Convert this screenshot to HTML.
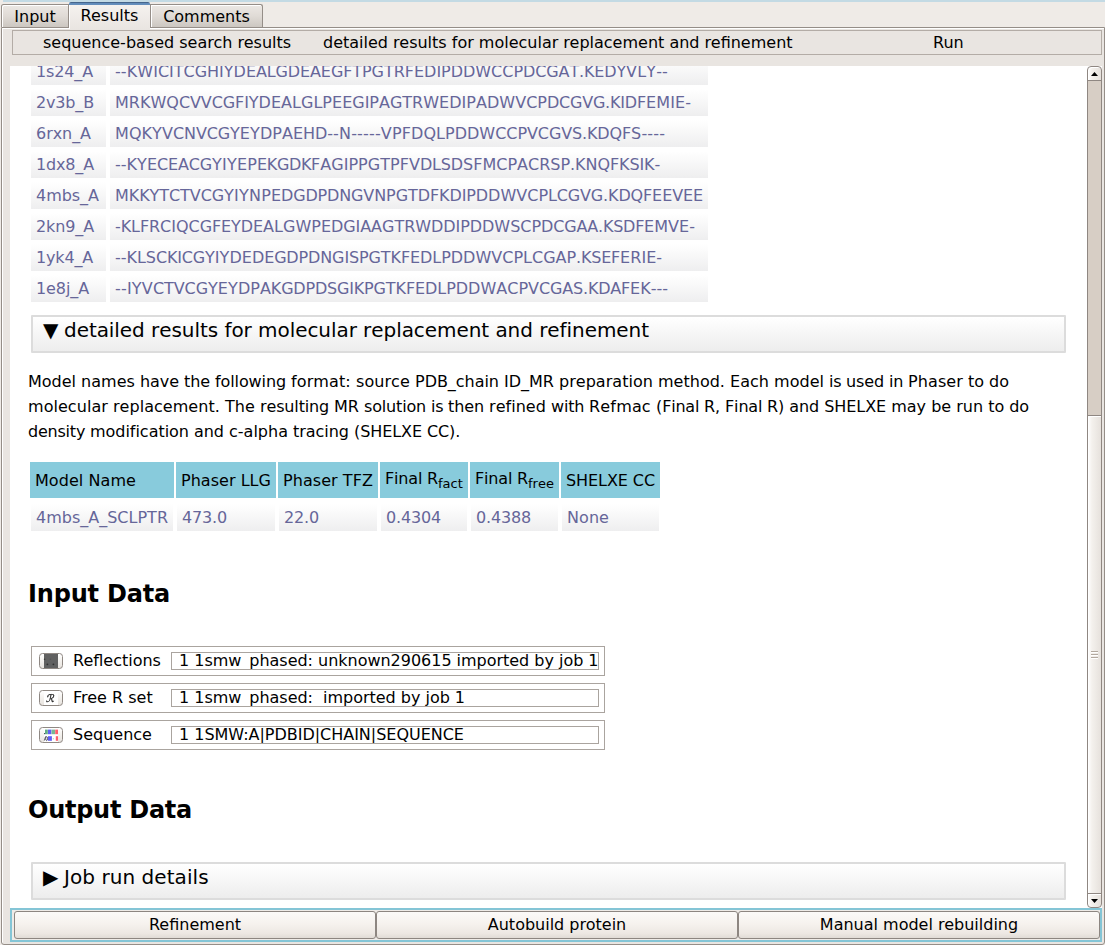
<!DOCTYPE html>
<html><head><meta charset="utf-8"><title>Results</title>
<style>
html,body{margin:0;padding:0}
body{width:1105px;height:945px;position:relative;overflow:hidden;background:#efebe7;font-family:"DejaVu Sans","Liberation Sans",sans-serif;font-size:16px;color:#000;font-kerning:none;font-variant-ligatures:none}
.abs{position:absolute}
#topstrip{left:3px;top:0;width:1102px;height:2px;background:#c3dae4}
.tab,#toolbar,.btn,.lab,.fld{font-variant-ligatures:normal;font-kerning:normal}
/* tabs */
.tab{position:absolute;box-sizing:border-box;border:1px solid #958e88;border-bottom:none;border-radius:2.5px 2.5px 0 0;background:linear-gradient(#ece8e4,#e0dbd6 50%,#ccc7c1);box-shadow:inset 1px 1px 0 #fff;text-align:center;line-height:24px;white-space:nowrap}
#tab1{left:1px;top:4px;width:68px;height:23px;border-radius:2.5px 0 0 0}
#tab3{left:150px;top:4px;width:113px;height:23px;border-radius:0 2.5px 0 0}
#tab2:before{content:"";position:absolute;left:0;top:3px;width:1px;height:24px;background:#fff}
#tab2{left:69px;top:2px;width:81px;height:27px;border:none;border-radius:2px 2px 0 0;box-shadow:none;background:linear-gradient(#46668c 0,#46668c 1px,#5f8ab9 1px,#6790bd 3px,#f5f2ef 3px,#e9e5e1 27px);line-height:27px;z-index:3}
#pane{left:1px;top:27px;width:1104px;height:918px;box-sizing:border-box;border:1px solid #958e88;border-radius:0 0 3px 3px;background:#e9e5e1;box-shadow:inset 1px 1px 0 #fff}
#toolbar{left:12px;top:30px;width:1090px;height:25px;box-sizing:border-box;border:1px solid #b3aca6;background:#e9e5e1}
#toolbar span{position:absolute;top:2px;line-height:19px;white-space:nowrap}
#view{left:10px;top:66px;width:1077px;height:842px;background:#fff;overflow:hidden}
/* report */
table.t{position:absolute;border-collapse:separate;border-spacing:2px;table-layout:fixed}
#t1{width:683px}#t2{width:634px}
#t2 th{border-bottom:3px solid #fff}
#t2 sub{font-size:13px;letter-spacing:0}
table.t td{border:1px solid #fff;padding:4px 5px;color:#666699;background:linear-gradient(#fff,#fbfbfb 25%,#eeeeef);white-space:nowrap;line-height:19px;height:19px}
table.t th{background:#88cbdc;color:#000;font-weight:normal;text-align:left;padding:0 5px;white-space:nowrap}
.fold{position:absolute;left:21px;width:1035px;height:38px;box-sizing:border-box;border:2px solid #dcdcdc;border-radius:1px;background:linear-gradient(#fff,#ededed);font-size:20px;line-height:28px;white-space:nowrap}
.fold span{position:absolute;top:-1px}
h2{position:absolute;margin:0;font-size:24px;font-weight:bold;left:18px;white-space:nowrap;line-height:28px}
.drow{position:absolute;left:21px;width:574px;height:30px;box-sizing:border-box;border:1px solid #aaa49f;background:#fff}
.ico{position:absolute;left:7px;top:6px;width:24px;height:16px;box-sizing:border-box;border:1px solid #8f8883;border-radius:3.5px;background:linear-gradient(#fff,#f6f4f1 40%,#e7e3de);overflow:hidden}
.ico svg{position:absolute;left:0;top:0;width:22px;height:14px;will-change:transform}
.lab{position:absolute;left:41px;top:4px;line-height:19px;white-space:nowrap}
.fld{position:absolute;left:139px;top:5px;width:428px;height:18px;box-sizing:border-box;border:1px solid #aaa49f;overflow:hidden;background:#fff}
.fld span{letter-spacing:-0.022px;position:absolute;left:7px;top:-2px;line-height:19px;white-space:nowrap}
/* scrollbar */
#sb{left:1087px;top:66px;width:15px;height:842px;background:#fff}
#sbgr{position:absolute;left:0;top:10px;width:15px;height:822px;box-sizing:border-box;border-left:1px solid #8f8782;border-right:1px solid #8f8782;background:#d7cec5}
.sbb{position:absolute;left:0;width:15px;box-sizing:border-box;border:1px solid #8f8782;background:linear-gradient(90deg,#fff,#f4f1ed 30%,#e6e1dc);box-shadow:inset 1px 1px 0 #fff}
#sbup{top:0;height:15px;border-radius:4px 4px 0 0}
#sbdn{top:827px;height:15px;border-radius:0 0 4px 4px}
#sbsl{top:349px;height:479px}
.arr{position:absolute;left:3px;width:7px;height:4px}
.grip{position:absolute;left:3px;width:7px;height:1px;background:#b3a99f;box-shadow:0 1px 0 #fff}
/* bottom */
#bframe{left:10px;top:908px;width:1092px;height:34px;box-sizing:border-box;border:2px solid #84c5d6;background:#efebe7}
.btn{position:absolute;top:911px;width:362px;height:28px;box-sizing:border-box;border:1px solid #8d8681;border-radius:3px;background:linear-gradient(#fcfaf8,#f6f2ee 45%,#ede8e3 82%,#e1dcd6);text-align:center;line-height:25px;white-space:nowrap}
</style></head><body>
<div id="topstrip" class="abs"></div>
<div id="pane" class="abs"></div>
<div id="tab1" class="tab">Input</div>
<div id="tab3" class="tab">Comments</div>
<div id="tab2" class="tab">Results</div>
<div id="toolbar" class="abs"><span style="left:30px">sequence-based search results</span><span style="left:310px">detailed results for molecular replacement and refinement</span><span style="left:920px">Run</span></div>
<div id="view" class="abs">
<table class="t" id="t1" style="left:18px;top:-11px">
<colgroup><col style="width:77px"><col style="width:600px"></colgroup>
<tr><td style="letter-spacing:-0.137px">1s24_A</td><td><span style="letter-spacing:0.084px">--KWI</span><span style="letter-spacing:-0.047px">CITCG</span><span style="letter-spacing:0.009px">HIYDE</span><span style="letter-spacing:-0.138px">ALGDE</span><span style="letter-spacing:-0.086px">AEGFT</span><span style="letter-spacing:-0.028px">PGTRF</span><span style="letter-spacing:-0.023px">EDIPD</span><span style="letter-spacing:-0.027px">DWCCP</span><span style="letter-spacing:-0.122px">DCGAT</span><span style="letter-spacing:-0.156px">.KEDY</span><span style="letter-spacing:0.164px">VLY--</span></td></tr>
<tr><td style="letter-spacing:-0.16px">2v3b_B</td><td><span style="letter-spacing:0.034px">MRKWQ</span><span style="letter-spacing:-0.127px">CVVCG</span><span style="letter-spacing:-0.025px">FIYDE</span><span style="letter-spacing:0.036px">ALGLP</span>EEGIP<span style="letter-spacing:-0.011px">AGTRW</span><span style="letter-spacing:0.052px">EDIPA</span><span style="letter-spacing:0.019px">DWVCP</span><span style="letter-spacing:-0.247px">DCGVG</span><span style="letter-spacing:-0.164px">.KIDF</span><span style="letter-spacing:0.097px">EMIE-</span></td></tr>
<tr><td style="letter-spacing:-0.052px">6rxn_A</td><td><span style="letter-spacing:0.078px">MQKYV</span><span style="letter-spacing:-0.131px">CNVCG</span><span style="letter-spacing:0.075px">YEYDP</span><span style="letter-spacing:-0.036px">AEHD-</span><span style="letter-spacing:0.188px">-N---</span><span style="letter-spacing:0.131px">--VPF</span><span style="letter-spacing:0.041px">DQLPD</span><span style="letter-spacing:-0.027px">DWCCP</span><span style="letter-spacing:-0.123px">VCGVS</span><span style="letter-spacing:-0.139px">.KDQF</span><span style="letter-spacing:0.15px">S----</span></td></tr>
<tr><td style="letter-spacing:-0.155px">1dx8_A</td><td><span style="letter-spacing:0.016px">--KYE</span><span style="letter-spacing:-0.159px">CEACG</span><span style="letter-spacing:0.195px">YIYEP</span><span style="letter-spacing:-0.362px">EKGDK</span><span style="letter-spacing:0.017px">FAGIP</span><span style="letter-spacing:0.066px">PGTPF</span><span style="letter-spacing:-0.131px">VDLSD</span>SFMCP<span style="letter-spacing:-0.008px">ACRSP</span><span style="letter-spacing:-0.069px">.KNQF</span><span style="letter-spacing:-0.127px">KSIK-</span></td></tr>
<tr><td style="letter-spacing:-0.034px">4mbs_A</td><td><span style="letter-spacing:-0.067px">MKKYT</span><span style="letter-spacing:-0.092px">CTVCG</span><span style="letter-spacing:0.223px">YIYNP</span><span style="letter-spacing:-0.159px">EDGDP</span><span style="letter-spacing:-0.12px">DNGVN</span><span style="letter-spacing:-0.069px">PGTDF</span><span style="letter-spacing:-0.1px">KDIPD</span><span style="letter-spacing:0.019px">DWVCP</span><span style="letter-spacing:-0.166px">LCGVG</span><span style="letter-spacing:-0.139px">.KDQF</span><span style="letter-spacing:-0.077px">EEVEE</span></td></tr>
<tr><td style="letter-spacing:-0.118px">2kn9_A</td><td><span style="letter-spacing:-0.1px">-KLFR</span><span style="letter-spacing:-0.011px">CIQCG</span><span style="letter-spacing:-0.103px">FEYDE</span><span style="letter-spacing:0.055px">ALGWP</span><span style="letter-spacing:-0.098px">EDGIA</span><span style="letter-spacing:-0.011px">AGTRW</span><span style="letter-spacing:-0.066px">DDIPD</span><span style="letter-spacing:-0.023px">DWSCP</span><span style="letter-spacing:-0.156px">DCGAA</span><span style="letter-spacing:-0.252px">.KSDF</span><span style="letter-spacing:0.052px">EMVE-</span></td></tr>
<tr><td style="letter-spacing:-0.173px">1yk4_A</td><td><span style="letter-spacing:-0.022px">--KLS</span><span style="letter-spacing:-0.191px">CKICG</span><span style="letter-spacing:0.061px">YIYDE</span><span style="letter-spacing:-0.159px">DEGDP</span><span style="letter-spacing:-0.113px">DNGIS</span><span style="letter-spacing:-0.103px">PGTKF</span><span style="letter-spacing:-0.062px">EDLPD</span><span style="letter-spacing:0.019px">DWVCP</span><span style="letter-spacing:-0.016px">LCGAP</span><span style="letter-spacing:-0.209px">.KSEF</span><span style="letter-spacing:0.034px">ERIE-</span></td></tr>
<tr><td style="letter-spacing:-0.099px">1e8j_A</td><td><span style="letter-spacing:0.203px">--IYV</span><span style="letter-spacing:-0.092px">CTVCG</span><span style="letter-spacing:0.075px">YEYDP</span><span style="letter-spacing:-0.161px">AKGDP</span><span style="letter-spacing:-0.217px">DSGIK</span><span style="letter-spacing:-0.103px">PGTKF</span><span style="letter-spacing:-0.062px">EDLPD</span><span style="letter-spacing:0.019px">DWACP</span><span style="letter-spacing:-0.123px">VCGAS</span><span style="letter-spacing:-0.209px">.KDAF</span><span style="letter-spacing:0.016px">EK---</span></td></tr>
</table>
<div class="fold" style="top:249px"><span style="left:10px">▼</span><span style="left:31px;letter-spacing:-0.057px">detailed results for molecular replacement and refinement</span></div>
<div class="abs" style="left:18px;top:303px;width:1060px;line-height:25px;white-space:nowrap"><span style="display:block"><span style="letter-spacing:-0.021px">Model </span><span style="letter-spacing:0.034px">names </span><span style="letter-spacing:-0.069px">have </span><span style="letter-spacing:-0.086px">the </span><span style="letter-spacing:-0.102px">following </span><span style="letter-spacing:0.107px">format: </span><span style="letter-spacing:0.061px">source </span><span style="letter-spacing:-0.036px">PDB_chain </span><span style="letter-spacing:-0.008px">ID_MR </span><span style="letter-spacing:0.029px">preparation </span><span style="letter-spacing:0.005px">method. </span><span style="letter-spacing:0.013px">Each </span><span style="letter-spacing:0.016px">model </span><span style="letter-spacing:-0.289px">is </span><span style="letter-spacing:-0.113px">used </span><span style="letter-spacing:-0.224px">in </span><span style="letter-spacing:0.08px">Phaser </span><span style="letter-spacing:-0.049px">to </span><span style="letter-spacing:0.027px">do</span></span> <span style="display:block"><span style="letter-spacing:0.048px">molecular </span><span style="letter-spacing:0.04px">replacement. </span><span style="letter-spacing:0.039px">The </span><span style="letter-spacing:-0.145px">resulting </span>MR <span style="letter-spacing:-0.161px">solution </span><span style="letter-spacing:-0.289px">is </span><span style="letter-spacing:-0.097px">then </span><span style="letter-spacing:0.034px">refined </span><span style="letter-spacing:-0.206px">with </span><span style="letter-spacing:0.162px">Refmac </span><span style="letter-spacing:-0.195px">(Final </span><span style="letter-spacing:-0.096px">R, </span><span style="letter-spacing:-0.188px">Final </span><span style="letter-spacing:-0.148px">R) </span><span style="letter-spacing:-0.047px">and </span><span style="letter-spacing:-0.052px">SHELXE </span><span style="letter-spacing:0.014px">may </span><span style="letter-spacing:-0.029px">be </span><span style="letter-spacing:0.014px">run </span><span style="letter-spacing:-0.049px">to </span><span style="letter-spacing:0.027px">do</span></span> <span style="display:block"><span style="letter-spacing:-0.219px">density </span><span style="letter-spacing:-0.03px">modification </span><span style="letter-spacing:-0.047px">and </span>c-alpha <span style="letter-spacing:-0.035px">tracing </span><span style="letter-spacing:-0.076px">(SHELXE </span><span style="letter-spacing:-0.168px">CC).</span></span></div>
<table class="t" id="t2" style="left:18px;top:394px">
<colgroup><col style="width:144px"><col style="width:100px"><col style="width:100px"><col style="width:88px"><col style="width:89px"><col style="width:99px"></colgroup>
<tr style="height:39px"><th style="letter-spacing:0.067px">Model Name</th><th style="letter-spacing:0.034px">Phaser LLG</th><th style="letter-spacing:0.062px">Phaser TFZ</th><th style="letter-spacing:-0.177px">Final R<sub>fact</sub></th><th style="letter-spacing:-0.177px">Final R<sub>free</sub></th><th style="letter-spacing:-0.079px">SHELXE CC</th></tr>
<tr><td style="letter-spacing:0.001px">4mbs_A_SCLPTR</td><td style="letter-spacing:-0.161px">473.0</td><td style="letter-spacing:-0.156px">22.0</td><td style="letter-spacing:-0.164px">0.4304</td><td style="letter-spacing:-0.164px">0.4388</td><td style="letter-spacing:0.064px">None</td></tr>
</table>
<h2 style="top:514px;letter-spacing:-0.189px">Input Data</h2>
<div class="drow" style="top:580px"><div class="ico"><svg viewBox="0 0 22 14"><rect x="4" y="0" width="14" height="14" fill="#616161"/><circle cx="7.4" cy="10.3" r="0.9" fill="#303030"/><circle cx="13.4" cy="10.3" r="0.9" fill="#303030"/><circle cx="4.6" cy="5.3" r="0.8" fill="#3a3a3a"/><circle cx="10.4" cy="5.2" r="0.8" fill="#555"/></svg></div><div class="lab">Reflections</div><div class="fld"><span>1 1smw_phased: unknown290615 imported by job 1</span></div></div>
<div class="drow" style="top:617px"><div class="ico"><svg viewBox="0 0 22 14"><rect x="4" y="0" width="14" height="14" fill="#fff"/><text x="11" y="11.2" text-anchor="middle" font-family="DejaVu Sans, Liberation Sans, sans-serif" font-size="10.5" font-style="italic" fill="#222" stroke="#222" stroke-width="0.3" opacity="0.98" transform="translate(1 0) skewX(-10)">ℛ</text></svg></div><div class="lab">Free R set</div><div class="fld"><span>1 1smw_phased:&nbsp; imported by job 1</span></div></div>
<div class="drow" style="top:654px"><div class="ico"><svg viewBox="0 0 22 14"><rect x="4" y="0" width="14" height="14" fill="#fff"/><rect x="4.2" y="5" width="0.8" height="1.2" fill="#224"/><rect x="5" y="1.6" width="2.8" height="4.6" fill="#62ad84"/><rect x="8" y="1.6" width="3.4" height="4.6" fill="#6060f5"/><rect x="11.6" y="1.6" width="3.4" height="4.6" fill="#79b892"/><rect x="15.2" y="1.6" width="2.8" height="4.6" fill="#ff5f6e"/><path d="M4.3 12.6 L5.6 8.4" stroke="#334" stroke-width="0.8" fill="none"/><ellipse cx="6.6" cy="10.6" rx="0.9" ry="2" fill="none" stroke="#334" stroke-width="0.8"/><rect x="8" y="8.2" width="3.9" height="4.6" fill="#6060f5"/><rect x="12.8" y="10" width="1" height="1.4" fill="#b5d9c0"/><rect x="15.8" y="8.2" width="2.2" height="4.6" fill="#ff5f6e"/></svg></div><div class="lab">Sequence</div><div class="fld"><span>1 1SMW:A|PDBID|CHAIN|SEQUENCE</span></div></div>
<h2 style="top:730px;letter-spacing:-0.258px">Output Data</h2>
<div class="fold" style="top:796px"><span style="left:10px">▶</span><span style="left:31px;letter-spacing:0.06px">Job run details</span></div>
</div>
<div id="sb" class="abs"><div id="sbgr"></div><div class="sbb" id="sbsl"><div class="grip" style="top:235px"></div><div class="grip" style="top:238px"></div><div class="grip" style="top:241px"></div></div><div class="sbb" id="sbup"><svg class="arr" style="top:5px" viewBox="0 0 7 4"><polygon points="0,4 7,4 3.5,0"/></svg></div><div class="sbb" id="sbdn"><svg class="arr" style="top:5px" viewBox="0 0 7 4"><polygon points="0,0 7,0 3.5,4"/></svg></div></div>
<div id="bframe" class="abs"></div>
<div class="btn" style="left:14px">Refinement</div>
<div class="btn" style="left:376px">Autobuild protein</div>
<div class="btn" style="left:738px">Manual model rebuilding</div>
</body></html>
